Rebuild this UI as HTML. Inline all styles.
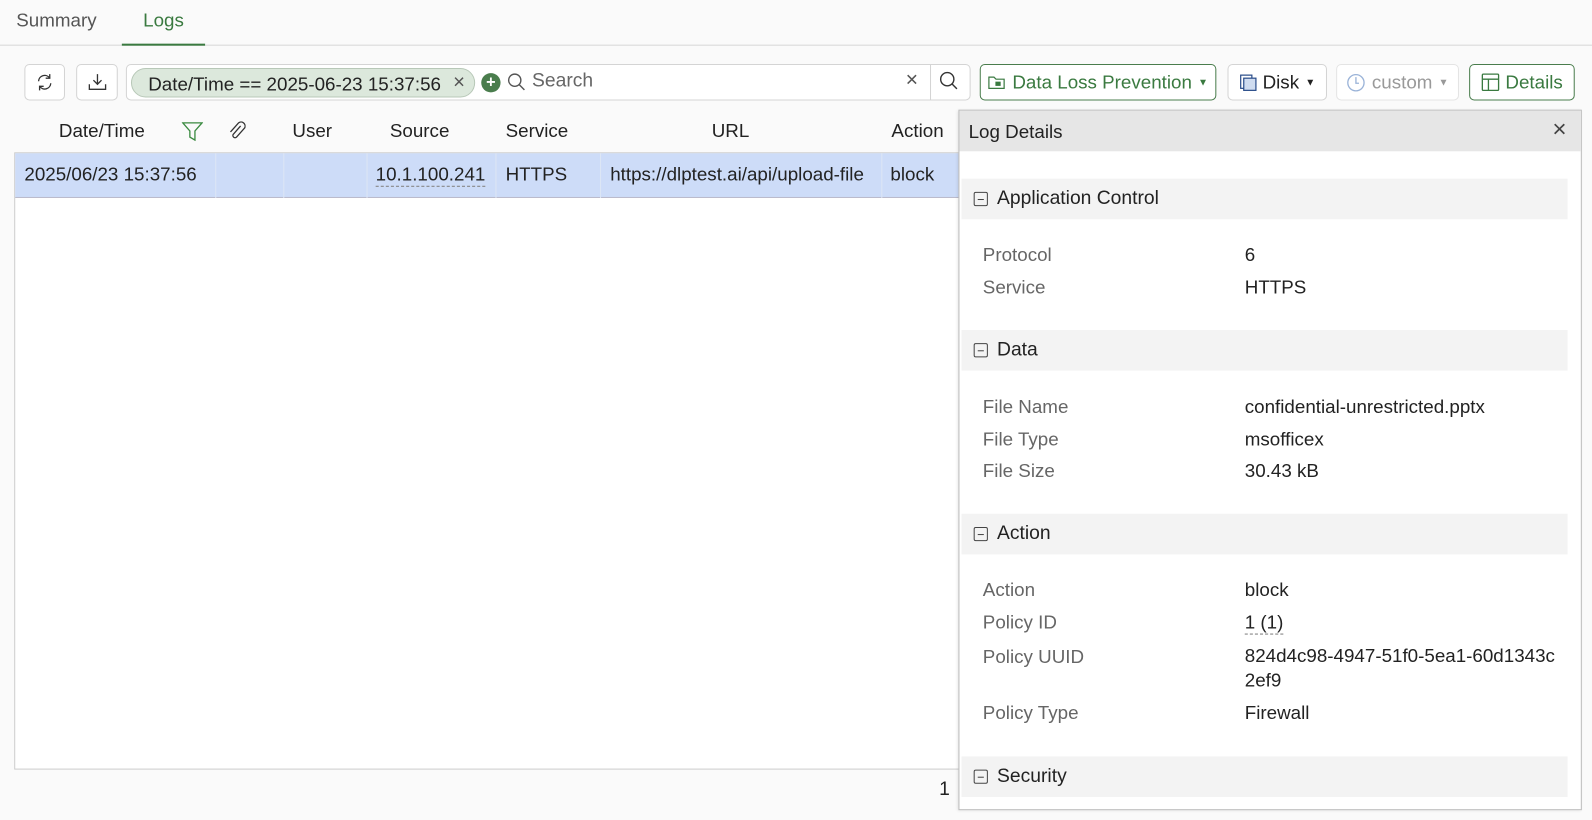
<!DOCTYPE html>
<html><head><meta charset="utf-8"><style>
*{box-sizing:border-box;margin:0;padding:0}
body{width:1592px;height:820px;background:#fafafa;font-family:"Liberation Sans",sans-serif;font-size:18px;color:#222;overflow:hidden}
#w{position:relative;width:1568px;height:808px;transform:scale(1.0153);transform-origin:0 0}
.abs{position:absolute}
.tab{position:absolute;top:9px;font-size:18.5px;color:#555}
.btn{position:absolute;top:63px;height:36px;border:1px solid #d4d4d4;border-radius:5px;background:#fff;display:flex;align-items:center;justify-content:center;gap:6px;font-size:18.5px}
.th{position:absolute;top:118px;font-size:18.5px;color:#222}
.td{position:absolute;top:161px;font-size:18.5px;color:#222}
.vl{position:absolute;top:151px;height:44px;width:1px;background:#dde6f5}
.sec{position:absolute;left:947px;width:597px;height:40px;background:#f3f3f3;font-size:19px;color:#222;display:flex;align-items:center;padding-left:12px}
.sec i{display:inline-block;width:14px;height:14px;border:1px solid #444;border-radius:2px;margin-right:9px;position:relative}
.sec i:after{content:"";position:absolute;left:3px;right:3px;top:6px;height:1px;background:#444}
.k{position:absolute;left:968px;color:#666;font-size:18.5px}
.v{position:absolute;left:1226px;color:#222;font-size:18.5px}
</style></head><body><div id="w">
<div class="tab" style="left:16px">Summary</div>
<div class="tab" style="left:141px;color:#3a7a40">Logs</div>
<div class="abs" style="left:0;top:44px;width:1592px;height:1px;background:#d8d8d8"></div>
<div class="abs" style="left:120px;top:43px;width:82px;height:2px;background:#3a7a40"></div>

<div class="btn" style="left:24px;width:40px"><svg width="18" height="18" viewBox="0 0 18 18" fill="none" stroke="#333" stroke-width="1.3"><path d="M3 8a6 6 0 0 1 11-3M15 10a6 6 0 0 1-11 3"/><path d="M14 1v4h-4M4 17v-4h4"/></svg></div>
<div class="btn" style="left:75px;width:41px"><svg width="20" height="18" viewBox="0 0 20 18" fill="none" stroke="#333" stroke-width="1.3"><path d="M10 1v10M6 7l4 4 4-4M2 11v5h16v-5"/></svg></div>
<div class="btn" style="left:124px;width:832px"></div>
<div class="abs" style="left:129px;top:67px;width:339px;height:29px;border-radius:15px;background:#dce8dc;border:1px solid #b8c8b8;font-size:18.5px;padding:4px 0 0 16px;color:#222;white-space:nowrap">Date/Time == 2025-06-23 15:37:56 <span style="position:absolute;right:9px;top:2px;color:#555;font-size:20px">×</span></div>
<div class="abs" style="left:474px;top:72px;width:19px;height:19px;border-radius:50%;background:#4a7d4d;color:#fff;font-size:16px;line-height:19px;text-align:center;font-weight:bold">+</div>
<svg class="abs" style="left:499px;top:71px" width="20" height="20" viewBox="0 0 20 20" fill="none" stroke="#555" stroke-width="1.4"><circle cx="8" cy="8" r="6"/><path d="M12.5 12.5l5 5"/></svg>
<div class="abs" style="left:524px;top:69px;font-size:19px;color:#666">Search</div>
<div class="abs" style="left:892px;top:67px;font-size:21px;color:#555">×</div>
<div class="abs" style="left:916px;top:64px;width:1px;height:34px;background:#d4d4d4"></div>
<svg class="abs" style="left:925px;top:70px" width="20" height="20" viewBox="0 0 20 20" fill="none" stroke="#333" stroke-width="1.4"><circle cx="8" cy="8" r="6.5"/><path d="M12.5 12.5l5 5"/></svg>

<div class="btn" style="left:965px;width:233px;border-color:#4a7d4d;color:#3a7a40;font-size:18.5px;white-space:nowrap"><svg width="18" height="16" viewBox="0 0 18 16" fill="none" stroke="#3a7a40" stroke-width="1.2"><path d="M1 3h5l2 2h8v9H1z"/><rect x="8" y="8" width="4" height="3" fill="#3a7a40"/></svg>Data Loss Prevention <span style="font-size:10px">▼</span></div>
<div class="btn" style="left:1209px;width:98px;font-size:18.5px"><svg width="17" height="17" viewBox="0 0 17 17" fill="none" stroke="#2a4d8a" stroke-width="1.2"><rect x="1" y="1" width="11" height="13"/><rect x="4" y="4" width="12" height="12" fill="#cfdcf0"/></svg>Disk <span style="font-size:10px">▼</span></div>
<div class="btn" style="left:1316px;width:121px;border-color:#e4e4e4;color:#999;font-size:18.5px"><svg width="19" height="19" viewBox="0 0 19 19" fill="none" stroke="#9ab3d8" stroke-width="1.3"><circle cx="9.5" cy="9.5" r="8"/><path d="M9.5 4v6h3"/></svg>custom <span style="font-size:10px">▼</span></div>
<div class="btn" style="left:1447px;width:104px;border-color:#4a7d4d;color:#3a7a40;font-size:18.5px"><svg width="18" height="18" viewBox="0 0 18 18" fill="none" stroke="#3a7a40" stroke-width="1.3"><rect x="1" y="1" width="16" height="16" rx="1"/><path d="M1 6h16M7 6v11"/></svg>Details</div>

<div class="abs" style="left:14px;top:150px;width:940px;height:608px;border:1px solid #ccc;background:#fff"></div>
<div class="th" style="left:58px">Date/Time</div>
<svg class="abs" style="left:179px;top:120px" width="21" height="19" viewBox="0 0 21 19" fill="none" stroke="#3a8a40" stroke-width="1.3"><path d="M1 1h19l-7 8v9l-5-3V9z"/></svg>
<svg class="abs" style="left:224px;top:118px" width="18" height="20" viewBox="0 0 18 20" fill="none" stroke="#333" stroke-width="1.3"><path d="M13 6l-7 8a2 2 0 0 0 3 3l8-9a4 4 0 0 0-6-5L3 12"/></svg>
<div class="th" style="left:288px">User</div>
<div class="th" style="left:384px">Source</div>
<div class="th" style="left:498px">Service</div>
<div class="th" style="left:701px">URL</div>
<div class="th" style="left:878px">Action</div>
<div class="abs" style="left:15px;top:151px;width:930px;height:44px;background:#cddcf8;border-bottom:1px solid #bbc"></div>
<div class="vl" style="left:212px"></div><div class="vl" style="left:279px"></div><div class="vl" style="left:361px"></div><div class="vl" style="left:488px"></div><div class="vl" style="left:591px"></div><div class="vl" style="left:868px"></div>
<div class="td" style="left:24px">2025/06/23 15:37:56</div>
<div class="td" style="left:370px;border-bottom:1px dashed #888">10.1.100.241</div>
<div class="td" style="left:498px">HTTPS</div>
<div class="td" style="left:601px;white-space:nowrap">https://dlptest.ai/api/upload-file</div>
<div class="td" style="left:877px">block</div>
<div class="abs" style="left:925px;top:767px;font-size:19px">1</div>

<div class="abs" style="left:944px;top:108px;width:614px;height:690px;background:#fff;border:1px solid #bbb;box-shadow:-1px 1px 3px rgba(0,0,0,.1)"></div>
<div class="abs" style="left:945px;top:109px;width:612px;height:40px;background:#e6e6e6;font-size:18.5px;padding:10px 0 0 9px">Log Details<span style="position:absolute;right:14px;top:5px;font-size:24px;color:#444">×</span></div>

<div class="sec" style="top:176px"><i></i>Application Control</div>
<div class="k" style="top:240px">Protocol</div><div class="v" style="top:240px">6</div>
<div class="k" style="top:272px">Service</div><div class="v" style="top:272px">HTTPS</div>
<div class="sec" style="top:325px"><i></i>Data</div>
<div class="k" style="top:390px">File Name</div><div class="v" style="top:390px">confidential-unrestricted.pptx</div>
<div class="k" style="top:422px">File Type</div><div class="v" style="top:422px">msofficex</div>
<div class="k" style="top:453px">File Size</div><div class="v" style="top:453px">30.43 kB</div>
<div class="sec" style="top:506px"><i></i>Action</div>
<div class="k" style="top:570px">Action</div><div class="v" style="top:570px">block</div>
<div class="k" style="top:602px">Policy ID</div><div class="v" style="top:602px;border-bottom:1px dashed #888">1 (1)</div>
<div class="k" style="top:636px">Policy UUID</div><div class="v" style="top:634px;width:330px;line-height:24px">824d4c98-4947-51f0-5ea1-60d1343c<br>2ef9</div>
<div class="k" style="top:691px">Policy Type</div><div class="v" style="top:691px">Firewall</div>
<div class="sec" style="top:745px"><i></i>Security</div>
</div></body></html>
